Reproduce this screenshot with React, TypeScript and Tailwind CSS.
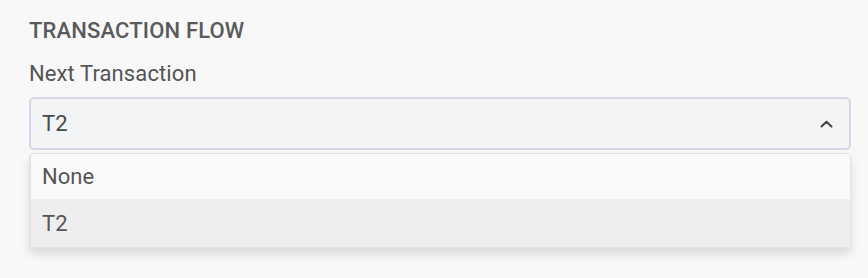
import React from 'react';

const options = ['None', 'T2'];

export default function App() {
  const selected = 'T2';

  return (
    <div className="min-h-screen bg-[#f8f8f9] pl-[29px] pr-[17px] pt-[17px] font-['Roboto',sans-serif] text-[#555]">
      <h2 className="text-[22px] font-medium uppercase leading-[28px] tracking-[0.15px] text-[#5a5a5a]">
        Transaction Flow
      </h2>
      <label className="mt-[15px] block text-[22px] leading-[28px] tracking-[0.1px] text-[#555]">Next Transaction</label>

      <div className="relative mt-[9px]">
        <button className="flex h-[53px] w-full items-center justify-between rounded-[5px] border-2 border-[#d6d5e6] bg-[#f3f4f6] pl-[11px] pr-[16px] text-left text-[22px] text-[#4a4a4a]">
          <span>{selected}</span>
          <svg width="13" height="8" viewBox="0 0 13 8" fill="none">
            <path d="M1.5 6.5 6.5 1.8l5 4.7" stroke="#444" strokeWidth="2" strokeLinecap="round" strokeLinejoin="round" />
          </svg>
        </button>

        <ul className="mt-[3px] overflow-hidden rounded-[5px] border border-l-2 border-[#e2e1ee] bg-[#fafafa] shadow-[0_6px_10px_rgba(0,0,0,0.12)]">
          {options.map((opt) => (
            <li
              key={opt}
              className={`flex items-center px-[11px] text-[22px] text-[#555] ${
                opt === selected ? 'h-[48px] bg-[#eeeeee]' : 'h-[45px]'
              }`}
            >
              {opt}
            </li>
          ))}
        </ul>
      </div>
    </div>
  );
}
